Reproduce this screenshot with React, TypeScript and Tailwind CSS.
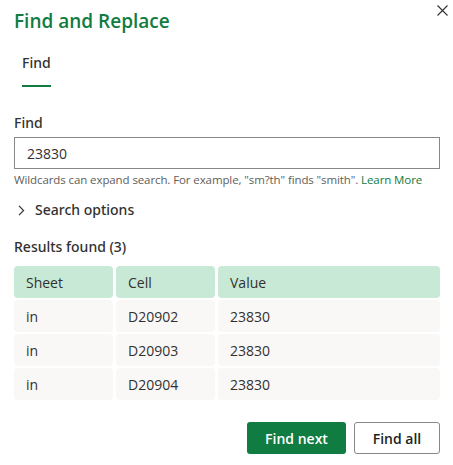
const rows = [
  { sheet: "in", cell: "D20902", value: "23830" },
  { sheet: "in", cell: "D20903", value: "23830" },
  { sheet: "in", cell: "D20904", value: "23830" },
];

export default function App() {
  return (
    <div className="relative w-[453px] h-[465px] bg-white pl-[14px] pr-[13px] font-['Open_Sans',sans-serif] text-[#323130]">
      <button className="absolute right-[5px] top-[5px] text-[#323130]">
        <svg width="11" height="11" viewBox="0 0 11 11" fill="none" stroke="currentColor" strokeWidth="1.1">
          <path d="M0.5 0.5 L10.5 10.5 M10.5 0.5 L0.5 10.5" />
        </svg>
      </button>

      <h1 className="pt-[7px] text-[19px] leading-[28px] font-semibold text-[#107c41]">
        Find and Replace
      </h1>

      <div className="mt-[18px] flex">
        <div className="ml-[8px] flex flex-col">
          <span className="text-[14px] leading-[20px] font-['Noto_Sans',sans-serif] font-medium text-[#323130]">Find</span>
          <span className="mt-[12px] h-[2px] w-full bg-[#107c41]" />
        </div>
      </div>

      <label className="mt-[26px] block text-[14px] leading-[20px] font-['Noto_Sans',sans-serif] font-medium">Find</label>
      <div className="mt-[4px] flex h-[32px] items-center border border-[#8a8886] px-[12px] text-[14px]">
        23830
      </div>
      <p className="mt-[3px] text-[11.5px] leading-[16px] text-[#605e5c] tracking-[-0.1px]">
        Wildcards can expand search. For example, "sm?th" finds "smith".{" "}
        <span className="text-[#107c41]">Learn More</span>
      </p>

      <div className="mt-[12px] flex items-center gap-[10px] pl-[4px]">
        <svg width="7" height="11" viewBox="0 0 7 11" fill="none" stroke="#323130" strokeWidth="1.2">
          <path d="M1 0.8 L5.6 5.5 L1 10.2" />
        </svg>
        <span className="text-[14px] leading-[20px] font-['Noto_Sans',sans-serif] font-medium">Search options</span>
      </div>

      <p className="mt-[17px] text-[14px] leading-[20px] font-['Noto_Sans',sans-serif] font-medium">Results found (3)</p>

      <div className="mt-[9px] grid grid-cols-[99px_99px_1fr] gap-x-[3px] gap-y-[2px] text-[14px]">
        {["Sheet", "Cell", "Value"].map((h) => (
          <div key={h} className="flex h-[32px] items-center rounded-[4px] bg-[#c8e9d6] px-[12px]">
            {h}
          </div>
        ))}
        {rows.map((r) =>
          [r.sheet, r.cell, r.value].map((v, i) => (
            <div key={r.cell + i} className="flex h-[32px] items-center rounded-[4px] bg-[#f9f8f6] px-[12px]">
              {v}
            </div>
          ))
        )}
      </div>

      <div className="mt-[22px] flex justify-end gap-[8px]">
        <button className="h-[32px] w-[99px] rounded-[3px] bg-[#107c41] text-[14px] font-semibold text-white">
          Find next
        </button>
        <button className="h-[32px] w-[86px] rounded-[3px] border border-[#8a8886] bg-white text-[14px] font-semibold text-[#201f1e]">
          Find all
        </button>
      </div>
    </div>
  );
}
